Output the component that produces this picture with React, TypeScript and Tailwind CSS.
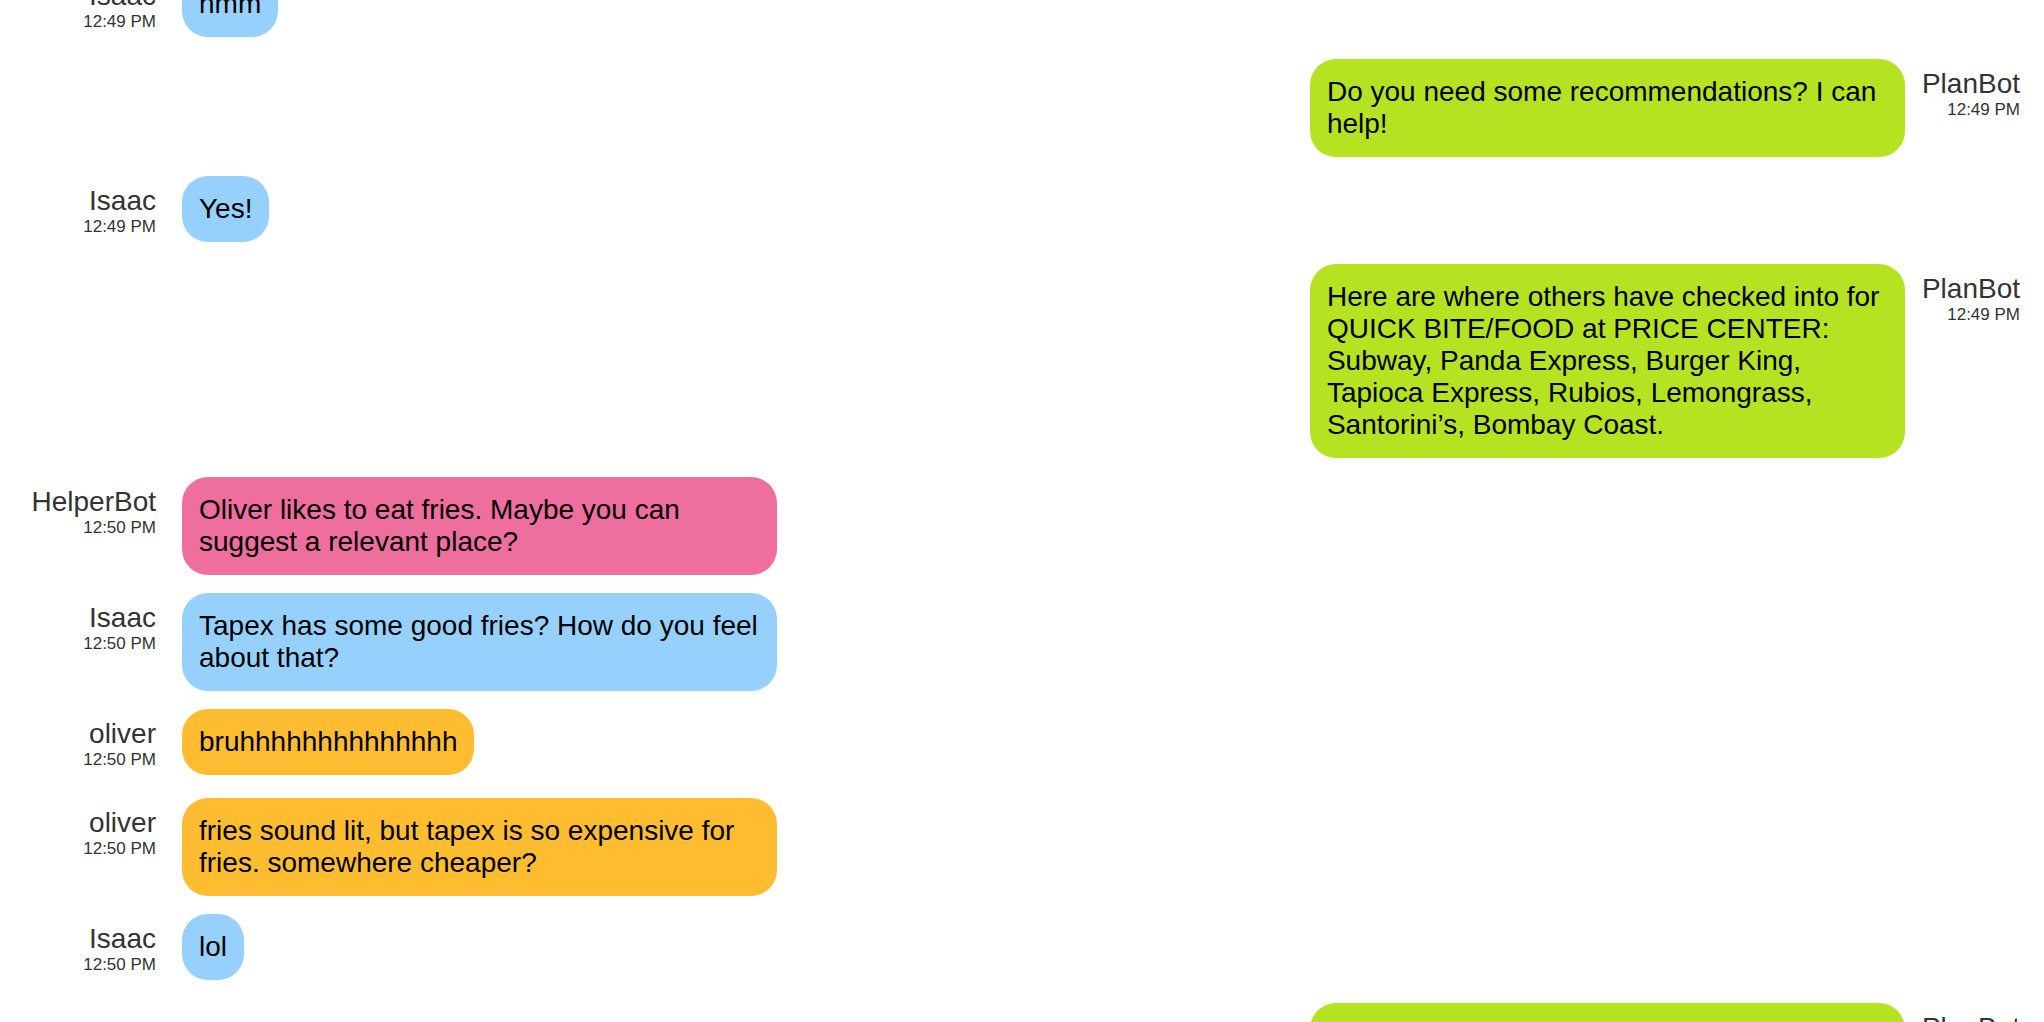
type Msg = {
  name: string
  time: string
  text: string
  side: "left" | "right"
  color: string
}

const messages: Msg[] = [
  { name: "Isaac", time: "12:49 PM", text: "hmm", side: "left", color: "bg-[#96d1fe]" },
  { name: "PlanBot", time: "12:49 PM", text: "Do you need some recommendations? I can help!", side: "right", color: "bg-[#b5e322]" },
  { name: "Isaac", time: "12:49 PM", text: "Yes!", side: "left", color: "bg-[#96d1fe]" },
  {
    name: "PlanBot",
    time: "12:49 PM",
    text: "Here are where others have checked into for QUICK BITE/FOOD at PRICE CENTER: Subway, Panda Express, Burger King, Tapioca Express, Rubios, Lemongrass, Santorini\u2019s, Bombay Coast.",
    side: "right",
    color: "bg-[#b5e322]",
  },
  { name: "HelperBot", time: "12:50 PM", text: "Oliver likes to eat fries. Maybe you can suggest a relevant place?", side: "left", color: "bg-[#ee6e9d]" },
  { name: "Isaac", time: "12:50 PM", text: "Tapex has some good fries? How do you feel about that?", side: "left", color: "bg-[#96d1fe]" },
  { name: "oliver", time: "12:50 PM", text: "bruhhhhhhhhhhhhhh", side: "left", color: "bg-[#febd31]" },
  { name: "oliver", time: "12:50 PM", text: "fries sound lit, but tapex is so expensive for fries. somewhere cheaper?", side: "left", color: "bg-[#febd31]" },
  { name: "Isaac", time: "12:50 PM", text: "lol", side: "left", color: "bg-[#96d1fe]" },
  {
    name: "PlanBot",
    time: "12:50 PM",
    text: "Here are some cheaper places that others have checked into for QUICK BITE/FOOD near PRICE CENTER: Shogun, Burger King, Subway.",
    side: "right",
    color: "bg-[#b5e322]",
  },
]

function Bubble({ msg }: { msg: Msg }) {
  return (
    <div className={`${msg.color} max-w-[595px] rounded-[26px] p-[17px] text-[28px] leading-[32px] text-black`}>
      {msg.text}
    </div>
  )
}

// name + time column; its 70px height sets the row height next to one-line bubbles
function Sender({ msg, className }: { msg: Msg; className?: string }) {
  return (
    <div className={`py-[9px] text-right text-[#333] ${className ?? ""}`}>
      <div className="text-[28px] leading-[32px]">{msg.name}</div>
      <div className="text-[17px] leading-[20px]">{msg.time}</div>
    </div>
  )
}

export default function App() {
  return (
    <div className="h-screen overflow-hidden bg-white font-['Liberation_Sans',Arial,sans-serif]">
      <div className="mt-[-29px] flex flex-col gap-[18.4px] px-6">
        {messages.map((m, i) =>
          m.side === "left" ? (
            <div key={i} className="flex items-start gap-[26px]">
              <Sender msg={m} className="w-[132px] shrink-0" />
              <Bubble msg={m} />
            </div>
          ) : (
            <div key={i} className="flex items-start justify-end gap-[17px]">
              <Bubble msg={m} />
              <Sender msg={m} className="shrink-0" />
            </div>
          )
        )}
      </div>
    </div>
  )
}
